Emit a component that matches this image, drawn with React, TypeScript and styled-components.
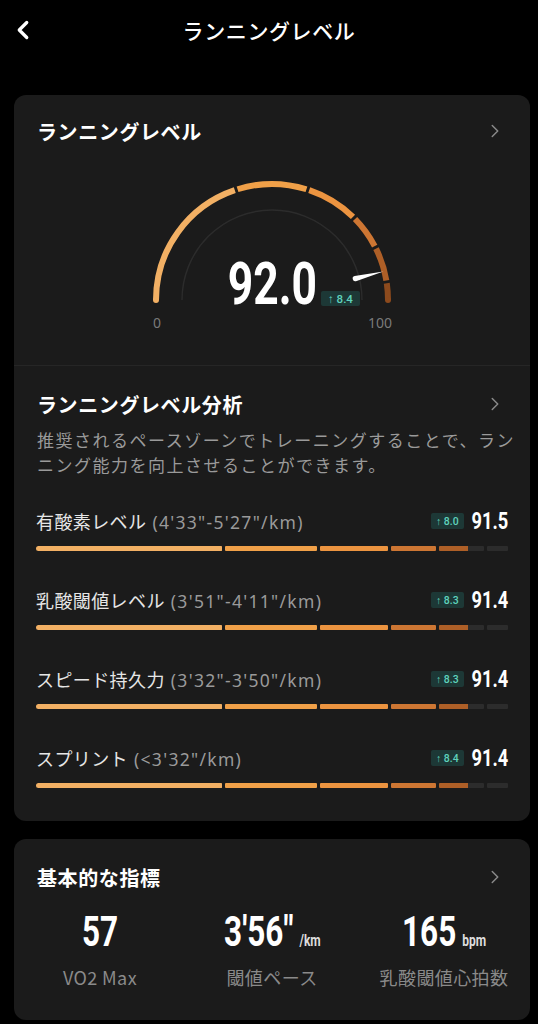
import React from "react";
import styled, { createGlobalStyle } from "styled-components";
import { ChevronLeft, ChevronRight } from "lucide-react";

const JP = `"Noto Sans CJK JP", "Noto Sans", sans-serif`;
const NUM = `"Roboto", "Liberation Sans", sans-serif`;

// segment boundaries as fractions of the full scale
const SEGMENTS = [
  { from: 0, to: 0.4, color: "#f2b064" },
  { from: 0.4, to: 0.6, color: "#f0a048" },
  { from: 0.6, to: 0.75, color: "#ec9440" },
  { from: 0.75, to: 0.85, color: "#cd7633" },
  { from: 0.85, to: 0.95, color: "#ae5f27" },
  { from: 0.95, to: 1, color: "#8c4a1d" },
];

const LEVELS = [
  { name: "有酸素レベル", range: "(4'33\"-5'27\"/km)", delta: "8.0", value: "91.5", fill: 0.915 },
  { name: "乳酸閾値レベル", range: "(3'51\"-4'11\"/km)", delta: "8.3", value: "91.4", fill: 0.914 },
  { name: "スピード持久力", range: "(3'32\"-3'50\"/km)", delta: "8.3", value: "91.4", fill: 0.914 },
  { name: "スプリント", range: "(<3'32\"/km)", delta: "8.4", value: "91.4", fill: 0.914 },
];

const STATS = [
  { value: "57", unit: "", label: "VO2 Max" },
  { value: "3'56\"", unit: "/km", label: "閾値ペース" },
  { value: "165", unit: "bpm", label: "乳酸閾値心拍数" },
];

const GlobalStyle = createGlobalStyle`
  html, body {
    margin: 0;
    padding: 0;
    background: #000;
  }
  * { box-sizing: border-box; }
`;

const CX = 130;
const CY = 125;
const R = 116;

const pt = (f: number, r: number) => {
  const a = Math.PI * (1 - f);
  return [CX + r * Math.cos(a), CY - r * Math.sin(a)];
};

const arc = (f1: number, f2: number, r: number) => {
  const [x1, y1] = pt(f1, r);
  const [x2, y2] = pt(f2, r);
  return `M ${x1.toFixed(2)} ${y1.toFixed(2)} A ${r} ${r} 0 0 1 ${x2.toFixed(2)} ${y2.toFixed(2)}`;
};

const Gauge: React.FC<{ value: number; delta: string }> = ({ value, delta }) => {
  const f = value / 100;
  const a = Math.PI * (1 - f);
  const nx = Math.cos(a);
  const ny = -Math.sin(a);
  const px = -ny;
  const py = nx;
  const r0 = 86;
  const r1 = 115;
  const base = [CX + nx * r0, CY + ny * r0];
  const tip = [CX + nx * r1, CY + ny * r1];
  const needle = `M ${tip[0]} ${tip[1]} L ${base[0] + px * 2.6} ${base[1] + py * 2.6} A 2.6 2.6 0 0 1 ${base[0] - px * 2.6} ${base[1] - py * 2.6} Z`;
  const [sx, sy] = pt(0, R);
  const [ex, ey] = pt(1, R);
  return (
    <GaugeBox>
      <svg width="260" height="131" viewBox="0 0 260 131">
        <path d={arc(0, 1, 90)} stroke="#2c2c2c" strokeWidth="1.4" fill="none" />
        {SEGMENTS.map((s, i) => (
          <path
            key={i}
            d={arc(s.from + (i ? 0.004 : 0), s.to - (i < SEGMENTS.length - 1 ? 0.004 : 0), R)}
            stroke={s.color}
            strokeWidth="6"
            fill="none"
          />
        ))}
        <circle cx={sx} cy={sy} r="3" fill="#f2b064" />
        <circle cx={ex} cy={ey} r="3" fill="#8c4a1d" />
        <path d={needle} fill="#fff" />
      </svg>
      <GaugeValue>
        <BigNumber>{value.toFixed(1)}</BigNumber>
      </GaugeValue>
      <GaugeBadge>
        <Badge $big>↑ {delta}</Badge>
      </GaugeBadge>
      <ScaleRow>
        <span>0</span>
        <span>100</span>
      </ScaleRow>
    </GaugeBox>
  );
};

const LevelBar: React.FC<{ fill: number }> = ({ fill }) => (
  <Bar>
    {SEGMENTS.map((s, i) => {
      const filled = Math.max(0, Math.min(1, (fill - s.from) / (s.to - s.from)));
      return (
        <BarSeg key={i} $frac={s.to - s.from}>
          <BarFill style={{ width: `${filled * 100}%` }} $color={s.color} />
        </BarSeg>
      );
    })}
  </Bar>
);

export default function App() {
  return (
    <>
      <GlobalStyle />
      <Page>
        <Header>
          <BackButton>
            <ChevronLeft size={30} strokeWidth={2.6} color="#fff" />
          </BackButton>
          <HeaderTitle>ランニングレベル</HeaderTitle>
        </Header>

        <Card>
          <CardHead>
            <CardTitle>ランニングレベル</CardTitle>
            <ChevronRight size={22} strokeWidth={1.6} color="#8a8a8a" />
          </CardHead>
          <Gauge value={92} delta="8.4" />
          <Divider />
          <Section>
            <CardHead>
              <CardTitle>ランニングレベル分析</CardTitle>
              <ChevronRight size={22} strokeWidth={1.6} color="#8a8a8a" />
            </CardHead>
            <Desc>推奨されるペースゾーンでトレーニングすることで、ランニング能力を向上させることができます。</Desc>
            <Levels>
              {LEVELS.map((l) => (
                <LevelRow key={l.name}>
                  <LevelHead>
                    <LevelName>
                      {l.name}
                      <LevelRange>{l.range}</LevelRange>
                    </LevelName>
                    <LevelRight>
                      <Badge>↑ {l.delta}</Badge>
                      <LevelValue>{l.value}</LevelValue>
                    </LevelRight>
                  </LevelHead>
                  <LevelBar fill={l.fill} />
                </LevelRow>
              ))}
            </Levels>
          </Section>
        </Card>

        <StatsCard>
          <CardHead>
            <CardTitle>基本的な指標</CardTitle>
            <ChevronRight size={22} strokeWidth={1.6} color="#8a8a8a" />
          </CardHead>
          <StatsGrid>
            {STATS.map((s) => (
              <Stat key={s.label}>
                <StatValue>
                  {s.value}
                  {s.unit && <StatUnit>{s.unit}</StatUnit>}
                </StatValue>
                <StatLabel>{s.label}</StatLabel>
              </Stat>
            ))}
          </StatsGrid>
        </StatsCard>
      </Page>
    </>
  );
}

const Page = styled.div`
  width: 538px;
  min-height: 1024px;
  background: #000;
  padding: 0 8px 0 14px;
  font-family: ${JP};
  color: #fff;
  display: flex;
  flex-direction: column;
`;

const Header = styled.div`
  position: relative;
  height: 60px;
  display: flex;
  align-items: center;
  justify-content: center;
  margin: 0 -8px 35px -14px;
`;

const BackButton = styled.div`
  position: absolute;
  left: 8px;
  top: 15px;
  display: flex;
`;

const HeaderTitle = styled.div`
  font-size: 21px;
  font-weight: 500;
  letter-spacing: 0.6px;
`;

const Card = styled.div`
  width: 516px;
  background: #1b1b1b;
  border-radius: 12px;
  padding-bottom: 33px;
`;

const CardHead = styled.div`
  display: flex;
  align-items: center;
  justify-content: space-between;
  height: 28px;
  padding: 0 24px 0 23px;
  margin-top: 22px;
`;

const CardTitle = styled.div`
  font-size: 20px;
  font-weight: 700;
  letter-spacing: 0.6px;
`;

const GaugeBox = styled.div`
  position: relative;
  width: 260px;
  margin: 30px auto 0;
  display: flex;
  flex-direction: column;
  svg {
    display: block;
  }
`;

const GaugeValue = styled.div`
  position: absolute;
  left: 0;
  right: 0;
  top: 79px;
  display: flex;
  justify-content: center;
`;

const BigNumber = styled.div`
  font-family: ${NUM};
  font-size: 60px;
  font-weight: 700;
  line-height: 60px;
  transform: scaleX(0.74);
`;

const GaugeBadge = styled.div`
  position: absolute;
  left: 179px;
  top: 116px;
  display: flex;
`;

const Badge = styled.span<{ $big?: boolean }>`
  display: inline-flex;
  align-items: center;
  height: ${(p) => (p.$big ? 15 : 16)}px;
  padding: 0 ${(p) => (p.$big ? 7 : 5)}px;
  border-radius: 2px;
  background: #1d3836;
  color: #5fd3bd;
  font-family: ${NUM};
  font-size: ${(p) => (p.$big ? 11.5 : 10.5)}px;
  font-weight: 500;
  white-space: nowrap;
`;

const ScaleRow = styled.div`
  margin-top: 9px;
  padding: 0 10px 0 11px;
  display: flex;
  justify-content: space-between;
  font-family: "Noto Sans", sans-serif;
  font-size: 14px;
  line-height: 16px;
  color: #7a7a7a;
`;

const Divider = styled.div`
  height: 1px;
  background: #262626;
  margin-top: 34px;
`;

const Section = styled.div`
  padding-top: 2px;
`;

const Desc = styled.p`
  margin: 9px 0 0;
  padding: 0 14px 0 23px;
  font-size: 17px;
  line-height: 25px;
  color: #9a9a9a;
  letter-spacing: 1.5px;
`;

const Levels = styled.div`
  display: flex;
  flex-direction: column;
  gap: 37px;
  margin-top: 32px;
  padding: 0 22px;
`;

const LevelRow = styled.div`
  display: flex;
  flex-direction: column;
  gap: 13px;
`;

const LevelHead = styled.div`
  display: flex;
  align-items: center;
  justify-content: space-between;
  height: 24px;
`;

const LevelName = styled.div`
  display: flex;
  align-items: baseline;
  gap: 6px;
  font-size: 18px;
  letter-spacing: 0.4px;
  color: #e6e6e6;
`;

const LevelRange = styled.span`
  font-family: "Noto Sans", ${JP};
  color: #9a9a9a;
  font-size: 17.5px;
  letter-spacing: 1.3px;
`;

const LevelRight = styled.div`
  display: flex;
  align-items: center;
  gap: 8px;
`;

const LevelValue = styled.div`
  font-family: ${NUM};
  font-size: 24px;
  font-weight: 700;
  margin-left: -12px;
  transform: scaleX(0.76);
  transform-origin: right center;
`;

const Bar = styled.div`
  display: flex;
  gap: 3px;
  height: 5px;
`;

const BarSeg = styled.div<{ $frac: number }>`
  flex: 0 0 calc(${(p) => p.$frac * 100}% - 2.5px);
  background: #2c2c2c;
  border-radius: 1px;
  overflow: hidden;
  &:first-child {
    border-radius: 3px 1px 1px 3px;
  }
`;

const BarFill = styled.div<{ $color: string }>`
  height: 100%;
  background: ${(p) => p.$color};
`;

const StatsCard = styled(Card)`
  margin-top: 18px;
  padding-bottom: 31px;
  ${CardHead} {
    margin-top: 24px;
  }
`;

const StatsGrid = styled.div`
  display: grid;
  grid-template-columns: repeat(3, 1fr);
  margin-top: 18px;
`;

const Stat = styled.div`
  display: flex;
  flex-direction: column;
  align-items: center;
  gap: 10px;
`;

const StatValue = styled.div`
  font-family: ${NUM};
  font-size: 42px;
  line-height: 46px;
  font-weight: 700;
  white-space: nowrap;
  transform: scaleX(0.75);
`;

const StatUnit = styled.span`
  font-size: 16px;
  line-height: 1;
  font-weight: 700;
  margin-left: 8px;
  color: #ddd;
`;

const StatLabel = styled.div`
  font-size: 18px;
  line-height: 24px;
  letter-spacing: 0.4px;
  color: #8a8a8a;
`;
